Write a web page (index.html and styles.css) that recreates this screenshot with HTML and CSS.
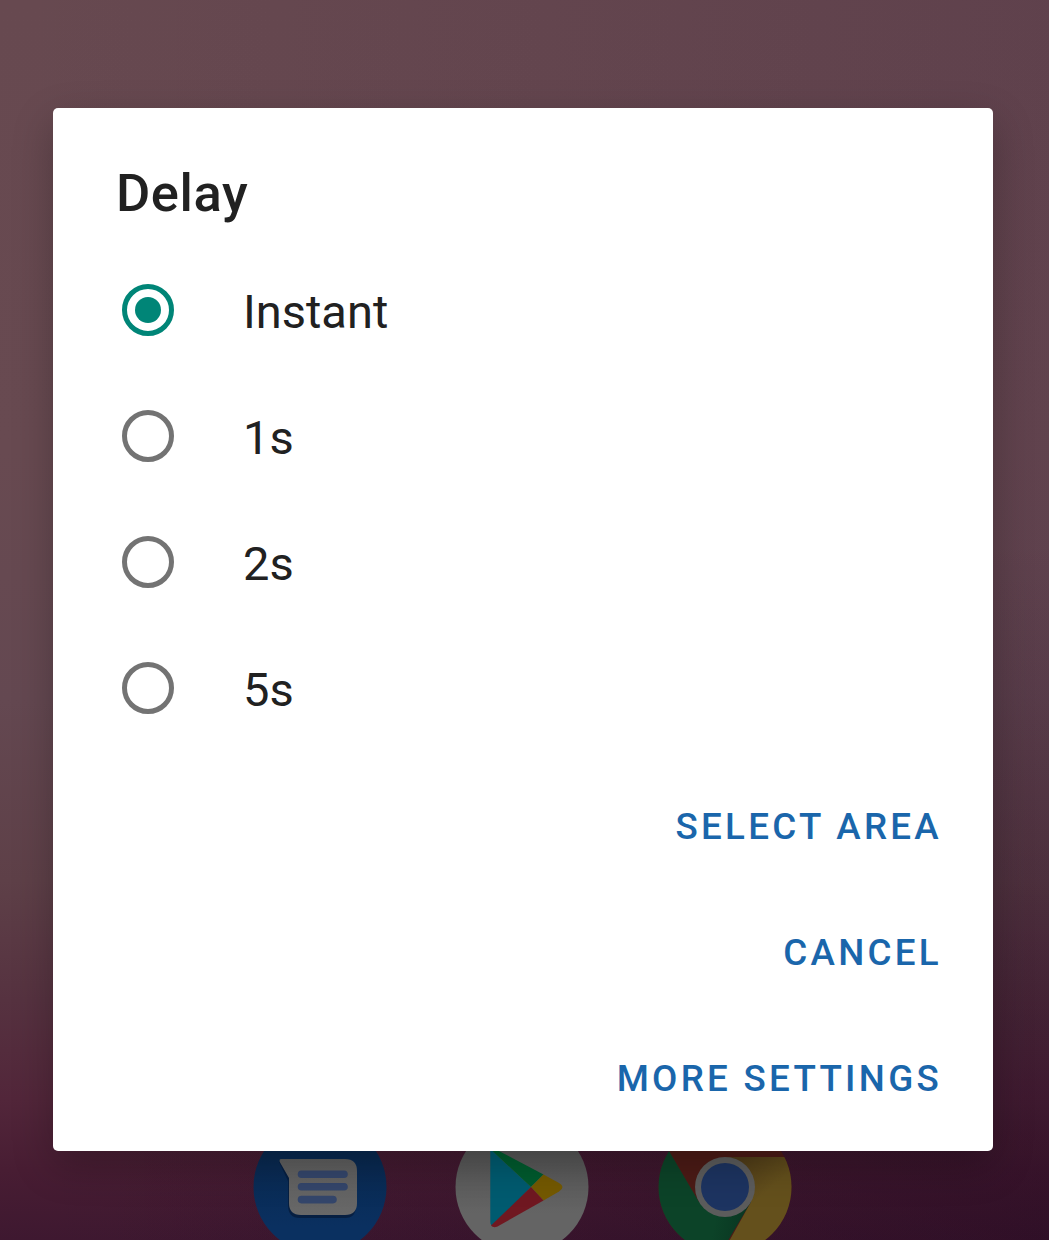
FILE: index.html
```html
<!DOCTYPE html>
<html lang="en">
<head>
<meta charset="utf-8">
<title>Delay</title>
<link rel="stylesheet" href="styles.css">
</head>
<body>
<main class="screen">
  <section class="dialog" role="dialog" aria-labelledby="title">
    <h1 class="title" id="title">Delay</h1>
    <div class="options" role="radiogroup">
      <label class="option"><input class="radio" type="radio" name="delay" checked><span>Instant</span></label>
      <label class="option"><input class="radio" type="radio" name="delay"><span>1s</span></label>
      <label class="option"><input class="radio" type="radio" name="delay"><span>2s</span></label>
      <label class="option"><input class="radio" type="radio" name="delay"><span>5s</span></label>
    </div>
    <div class="actions">
      <button class="action">SELECT AREA</button>
      <button class="action">CANCEL</button>
      <button class="action">MORE SETTINGS</button>
    </div>
  </section>
  <div class="dock">
    <svg class="app" viewBox="0 31 134 89" aria-label="Messages">
      <defs>
        <linearGradient id="msg" x2="0" y2="1"><stop offset=".2" stop-color="#09284e"/><stop offset=".8" stop-color="#0a3060"/></linearGradient>
        <linearGradient id="bubble" x2="0" y2="1"><stop stop-color="#5e5e5e"/><stop offset="1" stop-color="#686868"/></linearGradient>
      </defs>
      <circle cx="67" cy="67" r="66.5" fill="url(#msg)"/>
      <path d="M26 42L35 61V85Q35 98 47 98H92Q103 98 103 86V52Q103 42 92 42z" fill="#061f42"/>
      <path d="M28 39H92Q104 39 104 51V83Q104 95 92 95H48Q36 95 36 83V58L26.8 42Q26 39 28 39z" fill="url(#bubble)"/>
      <path d="M48.5 54.2H91M48.5 66.8H91M48.5 79.6H80" stroke="#34466b" stroke-width="7.6" stroke-linecap="round"/>
    </svg>
    <svg class="app" viewBox="0 31 134 89" aria-label="Play Store">
      <defs>
        <linearGradient id="play" x2="0" y2="1"><stop offset=".2" stop-color="#545454"/><stop offset=".7" stop-color="#646464"/></linearGradient>
      </defs>
      <circle cx="67" cy="67" r="66.5" fill="url(#play)"/>
      <path d="M35.3 29L76 67 39 106Q35.3 106 35.3 102z" fill="#005b70"/>
      <path d="M35.3 29L42 30 88.5 54.5 76 67z" fill="#005b2e"/>
      <path d="M88.5 54.5L104 63Q111 67 104 71.5L88.5 80.5 76 67z" fill="#745900"/>
      <path d="M76 67L88.5 80.5 42 106.8Q38 108 36 105.5z" fill="#701821"/>
    </svg>
    <svg class="app" viewBox="0 31 134 89" aria-label="Chrome">
      <defs>
        <clipPath id="disc"><circle cx="67" cy="67" r="66.5"/></clipPath>
        <linearGradient id="yellow" x1=".1" y1="0" x2=".4" y2=".5"><stop stop-color="#4b3717"/><stop offset="1" stop-color="#64501c"/></linearGradient>
        <linearGradient id="green" x1="0" y1=".6" x2="1" y2=".8"><stop offset=".6" stop-color="#0c4328"/><stop offset="1" stop-color="#093420"/></linearGradient>
      </defs>
      <g clip-path="url(#disc)">
        <rect width="134" height="134" fill="#4c1b16"/>
        <path d="M11 31L41 82 93 82 62 134H0V31z" fill="url(#green)"/>
        <path d="M67 37H134V134H64L93 82z" fill="url(#yellow)"/>
      </g>
      <circle cx="67" cy="67" r="30" fill="#5c5c5c"/>
      <circle cx="67" cy="67" r="24" fill="#1d3461"/>
    </svg>
  </div>
</main>
</body>
</html>
```
FILE: styles.css
```css
* { box-sizing: border-box; }

body {
  margin: 0;
  font-family: Roboto, "Liberation Sans", sans-serif;
  color: #212121;
}

.screen {
  width: 1049px;
  height: 1240px;
  padding: 108px 56px 0 53px;
  overflow: hidden;
  background:
    radial-gradient(ellipse 950px 700px at 100% 100%, rgba(30, 5, 25, .4), rgba(30, 5, 25, 0)),
    linear-gradient(90deg, rgba(40, 0, 50, 0) 0%, rgba(40, 10, 50, .12) 100%),
    linear-gradient(180deg, #674950 0, #684a51 450px, #644851 700px, #5e4048 880px, #563240 1000px, #52263a 1100px, #481d33 1170px, #3e1830 1240px);
}

.dialog {
  position: relative;
  z-index: 1;
  display: flex;
  flex-direction: column;
  height: 1043px;
  padding: 52px 51px 10px 63px;
  border-radius: 5px;
  background: #fff;
  box-shadow: 0 14px 42px rgba(0, 0, 0, .24);
}

.title {
  margin: 0;
  font-size: 52.5px;
  line-height: 66px;
  font-weight: 500;
  letter-spacing: .6px;
}

.options {
  display: flex;
  flex-direction: column;
  margin-top: 21px;
}

.option {
  display: flex;
  align-items: center;
  gap: 69px;
  height: 126px;
  padding-left: 6px;
  font-size: 47px;
}

.option span { padding-top: 3px; }

.radio {
  appearance: none;
  display: grid;
  place-items: center;
  width: 52px;
  height: 52px;
  margin: 0;
  border: 5px solid #737373;
  border-radius: 50%;
}

.radio:checked { border-color: #008577; }

.radio:checked::before {
  content: "";
  width: 26px;
  height: 26px;
  border-radius: 50%;
  background: #008577;
}

.actions {
  display: flex;
  flex-direction: column;
  align-items: flex-end;
  margin-top: 12px;
}

.action {
  height: 126px;
  padding: 0;
  border: 0;
  background: none;
  color: #1a66ab;
  font: 500 36.75px Roboto, "Liberation Sans", sans-serif;
  letter-spacing: 3.28px;
}

.dock {
  display: flex;
  gap: 68.3px;
  height: 89px;
  padding-left: 200.2px;
}

.app {
  display: block;
  flex: none;
  width: 134px;
  height: 89px;
}
```
